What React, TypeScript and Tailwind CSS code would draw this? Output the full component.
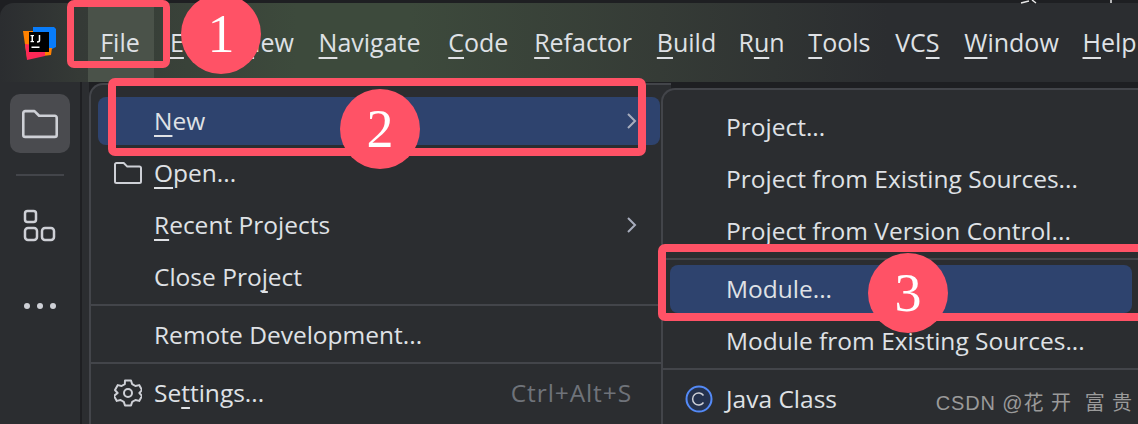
import { ReactNode } from 'react';

const U = ({ children }: { children: ReactNode }) => (
  <span className="underline decoration-2 underline-offset-[5px] [text-decoration-skip-ink:none]">{children}</span>
);

const FolderIcon = ({ size, className }: { size: number; className: string }) => (
  <svg width={size} height={size} viewBox="0 0 28 28" fill="none" stroke="currentColor" strokeWidth="2" className={className}>
    <path d="M1 5.500A1.500 1.500 0 0 1 2.500 4h7.200l3.600 3.600h12.200A1.500 1.500 0 0 1 27 9.100v13.400a1.500 1.500 0 0 1-1.500 1.500h-23A1.500 1.500 0 0 1 1 22.500Z" strokeLinejoin="round" />
  </svg>
);

const Chevron = () => (
  <svg width="12" height="18" viewBox="0 0 12 18" fill="none" stroke="#a8adbd" strokeWidth="2" className="absolute right-[22px]">
    <path d="M2 2l7 7-7 7" />
  </svg>
);

const Logo = () => (
  <svg width="33" height="34" viewBox="0 0 33 34">
    <path d="M0 5h11v26l-7 1Z" fill="#ff8100" />
    <path d="M10 1h21l2 2v18l-4 2H10Z" fill="#087cfa" />
    <path d="M20 22h9l-1 7-8 1Z" fill="#ff8100" />
    <path d="M2 18l20 2v10L4 34Z" fill="#fe2857" />
    <rect x="6" y="6" width="20" height="20" fill="#000" />
    <rect x="8.500" y="20.500" width="8" height="1.500" fill="#fff" />
    <rect x="8.500" y="9" width="1.500" height="7" fill="#fff" />
    <rect x="7.500" y="9" width="3.500" height="1.200" fill="#fff" />
    <rect x="7.500" y="15" width="3.500" height="1.200" fill="#fff" />
    <path d="M16.500 9v5.500c0 1-.7 1.500-2.500 1.500" stroke="#fff" strokeWidth="1.500" fill="none" />
  </svg>
);

const GearIcon = () => (
  <svg width="28" height="30" viewBox="0 0 28 30" fill="none" stroke="#ced0d6" strokeWidth="2" strokeLinejoin="round">
    <path d="M11 2.500h6l1.200 3.700 3.200 1.800 3.800-.9 2.800 5-2.600 2.900 2.600 2.900-2.800 5-3.800-.9-3.200 1.800L17 27.500h-6l-1.200-3.700-3.200-1.800-3.800.9-2.800-5L3.600 15 1 12.100l2.800-5 3.800.9 3.200-1.800Z" />
    <circle cx="14" cy="15" r="4" />
  </svg>
);

const menuFont = "font-['Open_Sans',sans-serif] text-[24.5px] text-[#dfe1e5] leading-none";
const titleFont = "font-['Open_Sans',sans-serif] text-[25px] text-[#dfe1e5] leading-none";

const MainRow = ({ children, icon, arrow, active }: { children: ReactNode; icon?: ReactNode; arrow?: boolean; active?: boolean }) => (
  <div className="h-[52px] pl-[7px] pr-[11px] flex items-center">
    <div className={`relative h-[48px] flex-1 rounded-[8px] flex items-center ${active ? 'bg-[#2e436e]' : ''}`}>
      <div className="w-[56px] pl-[16px] flex items-center">{icon}</div>
      <div className="flex-1 flex items-center justify-between pr-[28px]">{children}</div>
      {arrow && <Chevron />}
    </div>
  </div>
);

const SubRow = ({ children, icon, active }: { children: ReactNode; icon?: ReactNode; active?: boolean }) => (
  <div className="h-[52px] pl-[7px] flex items-center">
    <div className={`h-[48px] flex-1 rounded-[8px] flex items-center ${active ? 'bg-[#2e436e]' : ''}`}>
      <div className="w-[56px] pl-[15px] flex items-center">{icon}</div>
      <span className={menuFont}>{children}</span>
    </div>
  </div>
);

const Separator = ({ my }: { my: string }) => <div className={`h-[2px] bg-[#43454a] ${my}`} />;

const Callout = ({ n, className }: { n: number; className: string }) => (
  <div className={`absolute w-[80px] h-[80px] rounded-full bg-[#ff5266] flex items-center justify-center font-['Liberation_Serif',serif] text-[54px] text-white ${className}`}>
    {n}
  </div>
);

export default function App() {
  return (
    <div className="relative w-[1138px] h-[424px] overflow-hidden bg-[#1e1f22]">
      {/* title bar */}
      <div className="mt-[3px] h-[79px] rounded-tl-[14px] bg-[linear-gradient(90deg,#2b2d30_0%,#353a36_7%,#3d4a3c_26%,#3d4a3c_36%,#353b36_58%,#2b2d30_78%)] flex items-center relative">
        <div className="w-[88px] pl-[23px] pt-[1px] shrink-0"><Logo /></div>
        <div className={`h-full w-[66px] shrink-0 bg-[#4a5249] flex items-center justify-center pr-[2px] ${titleFont}`}><span><U>F</U>ile</span></div>
        <div className={`flex items-center shrink-0 gap-[24.75px] ml-[16px] ${titleFont}`}>
          <span><U>E</U>dit</span>
          <span><U>V</U>iew</span>
          <span><U>N</U>avigate</span>
          <span className="ml-[3px]"><U>C</U>ode</span>
          <span className="ml-[1px]"><U>R</U>efactor</span>
          <span><U>B</U>uild</span>
          <span className="-ml-[2.500px]">R<U>u</U>n</span>
          <span className="-ml-[1px]"><U>T</U>ools</span>
          <span>VC<U>S</U></span>
          <span><U>W</U>indow</span>
          <span className="-ml-[1px]"><U>H</U>elp</span>
        </div>
      </div>

      {/* body */}
      <div className="flex h-[342px]">
        <div className="w-[82px] shrink-0 bg-[#2b2d30] border-r-2 border-[#1e1f22] flex flex-col items-center pt-[12px]">
          <div className="w-[60px] h-[59px] rounded-[10px] bg-[#4a4b4f] flex items-center justify-center">
            <FolderIcon size={36} className="text-[#ced0d6]" />
          </div>
          <div className="w-[48px] h-[2px] bg-[#43454a] mt-[21px]" />
          <svg width="34" height="34" viewBox="0 0 34 34" fill="none" stroke="#ced0d6" strokeWidth="2.500" className="mt-[33px]">
            <rect x="2" y="2" width="11" height="11" rx="2.500" />
            <rect x="2" y="19" width="12" height="12" rx="3" />
            <rect x="19" y="19" width="12" height="12" rx="3" />
          </svg>
          <div className="flex gap-[7px] mt-[60px]">
            <div className="w-[6px] h-[6px] rounded-full bg-[#ced0d6]" />
            <div className="w-[6px] h-[6px] rounded-full bg-[#ced0d6]" />
            <div className="w-[6px] h-[6px] rounded-full bg-[#ced0d6]" />
          </div>
        </div>
        <div className="w-[7px] bg-[#2b2d30] shrink-0" />
        <div className="w-[582px] mt-[1px] shrink-0 bg-[#2b2d30] border-l-2 border-t-2 border-[#43454a] rounded-tl-[14px] pt-[10px] relative">
          <MainRow active arrow><span className={menuFont}><U>N</U>ew</span></MainRow>
          <MainRow icon={<FolderIcon size={28} className="text-[#ced0d6]" />}><span className={menuFont}><U>O</U>pen...</span></MainRow>
          <MainRow arrow><span className={menuFont}><U>R</U>ecent Projects</span></MainRow>
          <MainRow><span className={menuFont}>Close Pro<U>j</U>ect</span></MainRow>
          <Separator my="mt-[1px] mb-[3px]" />
          <MainRow><span className={menuFont}>Remote Development...</span></MainRow>
          <Separator my="mt-[1px] mb-[3px]" />
          <MainRow icon={<GearIcon />}>
            <span className={menuFont}>Se<U>t</U>tings...</span>
            <span className={`${menuFont} !text-[#6f737a] tracking-[0.9px]`}>Ctrl+Alt+S</span>
          </MainRow>
        </div>
      </div>

      {/* New submenu */}
      <div className="absolute left-[661px] top-[88px] w-[500px] h-[360px] bg-[#2b2d30] border-l-2 border-t-2 border-[#43454a] rounded-tl-[14px] pt-[11px] pr-[29px]">
        <SubRow>Project...</SubRow>
        <SubRow>Project from Existing Sources...</SubRow>
        <SubRow>Project from Version Control...</SubRow>
        <div className="h-[2px] bg-[#43454a] -mr-[29px] mt-[1px]" />
        <div className="h-[3px]" />
        <SubRow active>Module...</SubRow>
        <SubRow>Module from Existing Sources...</SubRow>
        <div className="h-[2px] bg-[#43454a] -mr-[29px] mt-[1px]" />
        <div className="h-[3px]" />
        <SubRow icon={
          <svg width="28" height="28" viewBox="0 0 28 28" fill="none">
            <circle cx="14" cy="14" r="12.500" stroke="#548af7" strokeWidth="2" fill="#25324d" />
            <path d="M18.500 10.500a6 6 0 1 0 0 7" stroke="#ced0d6" strokeWidth="1.500" />
          </svg>
        }>Java Class</SubRow>
      </div>

      {/* screenshot annotations */}
      <div className="absolute left-[67px] top-0 w-[103px] h-[68px] border-[7.500px] border-[#ff5266] rounded-[7px]" />
      <div className="absolute left-[108px] top-[78px] w-[538px] h-[78px] border-[8px] border-[#ff5266] rounded-[7px]" />
      <div className="absolute left-[658px] top-[244px] w-[500px] h-[77px] border-[8px] border-[#ff5266] rounded-[7px]" />
      <Callout n={1} className="left-[181px] top-[-6px]" />
      <Callout n={2} className="left-[340px] top-[89px]" />
      <Callout n={3} className="left-[868px] top-[253px]" />

      {/* watermark */}
      <div className="absolute right-[5px] top-[393px] font-['Liberation_Sans','Noto_Sans_CJK_SC',sans-serif] text-[20px] leading-none tracking-[0.9px] text-[#9a9a9a] whitespace-pre">CSDN @花 开  富 贵</div>

      {/* cropped window glyphs at the very top */}
      <svg width="100" height="4" viewBox="0 0 100 4" className="absolute left-[1020px] top-0">
        <path d="M1 3l8-2M12 0l4 3M91 0v3" stroke="#e8e8e8" strokeWidth="1.500" fill="none" />
      </svg>
    </div>
  );
}
